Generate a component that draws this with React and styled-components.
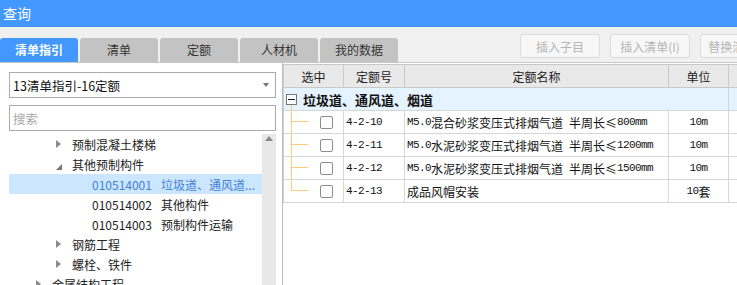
import React from 'react';
import styled, { createGlobalStyle } from 'styled-components';

const GlobalStyle = createGlobalStyle`
  *, *::before, *::after {
    box-sizing: border-box;
  }
  html, body {
    margin: 0;
    padding: 0;
    background: #f0f0f0;
  }
  body {
    font-family: "Noto Sans CJK SC", "Microsoft YaHei", sans-serif;
    font-size: 12px;
    color: #222;
  }
`;

const Window = styled.div`
  width: 737px;
  height: 285px;
  overflow: hidden;
  display: flex;
  flex-direction: column;
  background: #f0f0f0;
`;

const TitleBar = styled.div`
  height: 27px;
  flex-shrink: 0;
  padding-left: 3px;
  background: #4398ff;
  color: #fff;
  font-size: 14px;
  line-height: 27px;
`;

const TabRow = styled.div`
  height: 35px;
  flex-shrink: 0;
  display: flex;
  align-items: flex-end;
  overflow: hidden;
`;

const Tabs = styled.div`
  display: flex;
  gap: 2px;
  flex-shrink: 0;
`;

const Tab = styled.div`
  width: 78px;
  height: 24px;
  line-height: 24px;
  text-align: center;
  border-radius: 3px 3px 0 0;
  font-size: 12px;
  background: ${p => (p.$active ? '#4398ff' : '#c3c3c3')};
  color: ${p => (p.$active ? '#fff' : '#333')};
  font-weight: ${p => (p.$active ? 700 : 400)};
`;

const Actions = styled.div`
  display: flex;
  gap: 10px;
  flex-shrink: 0;
  align-self: flex-start;
  margin: 7px 0 0 122px;
`;

const ActionButton = styled.button`
  width: 80px;
  height: 24px;
  padding: 0;
  flex-shrink: 0;
  border: 1px solid #dcdcdc;
  border-radius: 3px;
  background: #f7f7f7;
  color: #b5b5b5;
  font: inherit;
  font-size: 12px;
  white-space: nowrap;
  overflow: hidden;
`;

const Main = styled.div`
  flex: 1;
  min-height: 0;
  display: flex;
  border-top: 1px solid #c8c8c8;
  background: #fff;
`;

const LeftPanel = styled.div`
  width: 283px;
  flex-shrink: 0;
  display: flex;
  flex-direction: column;
  padding: 9px 6px 0 9px;
  border-right: 1px solid #bcbcbc;
`;

const Select = styled.div`
  height: 26px;
  flex-shrink: 0;
  display: flex;
  align-items: center;
  justify-content: space-between;
  padding: 0 6px 0 3px;
  margin-bottom: 7px;
  border: 1px solid #ababab;
  color: #111;
  font-size: 12.5px;
`;

const Caret = styled.span`
  width: 0;
  height: 0;
  border-top: 4px solid #777;
  border-left: 3px solid transparent;
  border-right: 3px solid transparent;
`;

const Search = styled.input`
  height: 26px;
  flex-shrink: 0;
  margin: 0 0 3px;
  padding: 0 3px;
  border: 1px solid #ababab;
  outline: none;
  font: inherit;
  font-size: 12.5px;
  &::placeholder {
    color: #a8a8a8;
  }
`;

const Tree = styled.div`
  flex: 1;
  min-height: 0;
  display: flex;
`;

const TreeList = styled.div`
  flex: 1;
  min-width: 0;
  overflow: hidden;
`;

const TreeRow = styled.div`
  height: 20px;
  display: flex;
  align-items: center;
  padding-left: ${p => 27 + (p.$level - 1) * 20}px;
  white-space: nowrap;
  overflow: hidden;
  background: ${p => (p.$selected ? '#cce6ff' : 'transparent')};
  color: ${p => (p.$selected ? '#3e7fd8' : '#222')};
`;

const Toggle = styled.span`
  width: 16px;
  height: 20px;
  flex-shrink: 0;
  display: flex;
  align-items: center;

  &::before {
    content: '';
    width: 0;
    height: 0;
    ${p =>
      p.$open
        ? `border-bottom: 6px solid #777;
           border-left: 6px solid transparent;
           margin-top: 5px;`
        : `border-left: 5px solid #8a8a8a;
           border-top: 4px solid transparent;
           border-bottom: 4px solid transparent;`}
  }
`;

const Leaf = styled.span`
  width: 16px;
  flex-shrink: 0;
`;

const TreeCode = styled.span`
  margin-right: 9px;
`;

const Scrollbar = styled.div`
  width: 14px;
  flex-shrink: 0;
  display: flex;
  justify-content: center;
  padding-top: 2px;
  background: #e8e8e8;

  &::before {
    content: '';
    width: 0;
    height: 0;
    border-bottom: 5px solid #8a8a8a;
    border-left: 4px solid transparent;
    border-right: 4px solid transparent;
  }
`;

const RightPanel = styled.div`
  flex: 1;
  min-width: 0;
  overflow: hidden;
  padding-top: 1px;
`;

const Grid = styled.div`
  display: grid;
  grid-template-columns: 60px 61px 264px 60px 60px;
  grid-auto-rows: 23px;
  width: max-content;
  border-top: 1px solid #c8c8c8;
  border-left: 1px solid #cfcfcf;
`;

const HeadCell = styled.div`
  display: flex;
  align-items: center;
  justify-content: center;
  background: #e9e9e9;
  border-right: 1px solid #c9c9c9;
  border-bottom: 1px solid #c9c9c9;
  color: #222;
  font-size: 12px;
`;

const GroupCell = styled.div`
  grid-column: ${p => (p.$wide ? 'span 4' : 'auto')};
  display: flex;
  align-items: center;
  padding-left: 2px;
  background: #e5f3ff;
  border-right: 1px solid #d6d6d6;
  border-bottom: 1px solid #d6d6d6;
  position: relative;
  font-size: 13px;
  font-weight: 700;
  color: #111;

  &::after {
    content: ${p => (p.$wide ? "''" : 'none')};
    position: absolute;
    left: 7px;
    top: 17px;
    bottom: -1px;
    width: 1px;
    background: #ffc97b;
  }
`;

const MinusBox = styled.span`
  width: 11px;
  height: 11px;
  flex-shrink: 0;
  margin-right: 6px;
  display: flex;
  align-items: center;
  justify-content: center;
  border: 1px solid #777;
  background: #fff;

  &::before {
    content: '';
    width: 7px;
    height: 1px;
    background: #222;
  }
`;

const Cell = styled.div`
  display: flex;
  align-items: center;
  justify-content: ${p => (p.$center ? 'center' : 'flex-start')};
  padding-left: ${p => (p.$center ? 0 : 2)}px;
  border-right: 1px solid #d6d6d6;
  border-bottom: 1px solid #d6d6d6;
  white-space: nowrap;
  overflow: hidden;
  color: #111;
  font-size: 12px;
`;

const PickCell = styled(Cell)`
  position: relative;
  padding-left: 36px;

  &::before {
    content: '';
    position: absolute;
    left: 7px;
    top: -1px;
    bottom: ${p => (p.$last ? '11px' : '-1px')};
    width: 1px;
    background: #ffc97b;
  }
  &::after {
    content: '';
    position: absolute;
    left: 7px;
    top: 10px;
    width: 17px;
    height: 1px;
    background: #ffc97b;
  }
`;

const Checkbox = styled.span`
  width: 13px;
  height: 13px;
  border: 1px solid #8d8d8d;
  border-radius: 2px;
  background: #fff;
`;

const Half = styled.span`
  font-family: "Liberation Mono", monospace;
  font-size: 11px;
  letter-spacing: -0.6px;
  white-space: pre;
`;

const Mixed = ({ text }) =>
  text
    .split(/([\x20-\x7e]+)/)
    .filter(Boolean)
    .map((part, i) =>
      /^[\x20-\x7e]+$/.test(part) ? <Half key={i}>{part}</Half> : <span key={i}>{part}</span>
    );

const tabs = ['清单指引', '清单', '定额', '人材机', '我的数据'];
const actions = ['插入子目', '插入清单(I)', '替换清单(R)'];

const treeRows = [
  { level: 2, toggle: 'closed', label: '预制混凝土楼梯' },
  { level: 2, toggle: 'open', label: '其他预制构件' },
  { level: 3, code: '010514001', label: '垃圾道、通风道...', selected: true },
  { level: 3, code: '010514002', label: '其他构件' },
  { level: 3, code: '010514003', label: '预制构件运输' },
  { level: 2, toggle: 'closed', label: '钢筋工程' },
  { level: 2, toggle: 'closed', label: '螺栓、铁件' },
  { level: 1, toggle: 'closed', label: '金属结构工程' },
];

const columns = ['选中', '定额号', '定额名称', '单位', ''];

const quotaRows = [
  { code: '4-2-10', name: 'M5.0混合砂浆变压式排烟气道 半周长≤800mm', unit: '10m' },
  { code: '4-2-11', name: 'M5.0水泥砂浆变压式排烟气道 半周长≤1200mm', unit: '10m' },
  { code: '4-2-12', name: 'M5.0水泥砂浆变压式排烟气道 半周长≤1500mm', unit: '10m' },
  { code: '4-2-13', name: '成品风帽安装', unit: '10套' },
];

export default function App() {
  return (
    <>
      <GlobalStyle />
      <Window>
        <TitleBar>查询</TitleBar>
        <TabRow>
          <Tabs>
            {tabs.map((t, i) => (
              <Tab key={t} $active={i === 0}>{t}</Tab>
            ))}
          </Tabs>
          <Actions>
            {actions.map(a => (
              <ActionButton key={a} disabled>{a}</ActionButton>
            ))}
          </Actions>
        </TabRow>
        <Main>
          <LeftPanel>
            <Select>
              <span>13清单指引-16定额</span>
              <Caret />
            </Select>
            <Search placeholder="搜索" />
            <Tree>
              <TreeList>
                {treeRows.map((r, i) => (
                  <TreeRow key={i} $level={r.level} $selected={r.selected}>
                    {r.toggle ? <Toggle $open={r.toggle === 'open'} /> : <Leaf />}
                    {r.code && <TreeCode>{r.code}</TreeCode>}
                    <span>{r.label}</span>
                  </TreeRow>
                ))}
              </TreeList>
              <Scrollbar />
            </Tree>
          </LeftPanel>
          <RightPanel>
            <Grid>
              {columns.map((c, i) => (
                <HeadCell key={i}>{c}</HeadCell>
              ))}
              <GroupCell $wide>
                <MinusBox />
                垃圾道、通风道、烟道
              </GroupCell>
              <GroupCell />
              {quotaRows.map((r, i) => (
                <React.Fragment key={r.code}>
                  <PickCell $last={i === quotaRows.length - 1}>
                    <Checkbox />
                  </PickCell>
                  <Cell><Mixed text={r.code} /></Cell>
                  <Cell><Mixed text={r.name} /></Cell>
                  <Cell $center><Mixed text={r.unit} /></Cell>
                  <Cell />
                </React.Fragment>
              ))}
            </Grid>
          </RightPanel>
        </Main>
      </Window>
    </>
  );
}
